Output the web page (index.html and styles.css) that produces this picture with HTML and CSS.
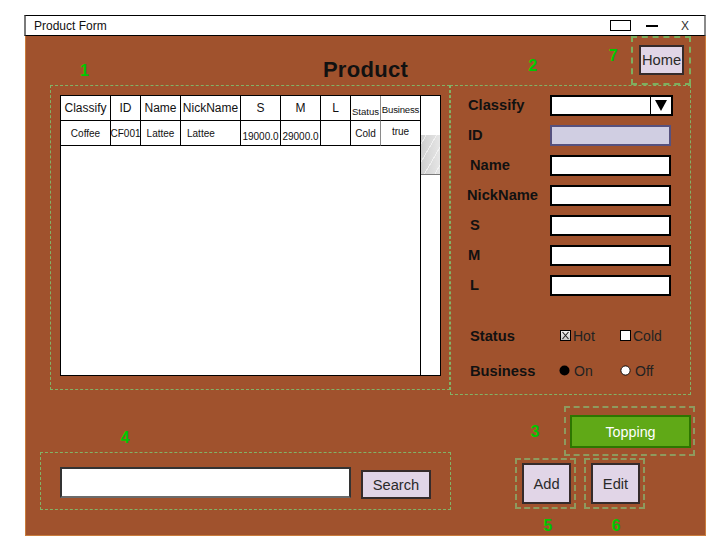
FILE: index.html
```html
<!DOCTYPE html>
<html lang="en">
<head>
<meta charset="utf-8">
<title>Product Form</title>
<link rel="stylesheet" href="styles.css">
</head>
<body>
<div class="window">
  <div class="titlebar">
    <span class="wintitle">Product Form</span>
    <span class="ctl-restore"></span>
    <span class="ctl-min"></span>
    <span class="ctl-close">X</span>
  </div>
  <div class="canvas">
    <div class="header">
      <span class="num n1">1</span>
      <h1 class="title">Product</h1>
      <span class="num n2">2</span>
      <span class="num n7">7</span>
      <div class="homebox"><button class="btn home">Home</button></div>
    </div>

    <div class="main">
      <div class="panel-left">
        <div class="tablebox">
          <div class="grid">
            <div class="th">Classify</div>
            <div class="th">ID</div>
            <div class="th">Name</div>
            <div class="th">NickName</div>
            <div class="th">S</div>
            <div class="th">M</div>
            <div class="th">L</div>
            <div class="th small status">Status</div>
            <div class="th small last">Business</div>

            <div class="td">Coffee</div>
            <div class="td">CF001</div>
            <div class="td">Lattee</div>
            <div class="td left">Lattee</div>
            <div class="td low">19000.0</div>
            <div class="td low">29000.0</div>
            <div class="td"></div>
            <div class="td status">Cold</div>
            <div class="td last high">true</div>
          </div>
          <div class="scroll"><div class="thumb"></div></div>
        </div>
      </div>

      <div class="panel-right">
        <div class="form">
          <label class="flabel">Classify</label>
          <div class="select"><div class="sel-field"></div><div class="sel-arrow"><svg width="12" height="11" viewBox="0 0 12 11"><polygon points="0,0 12,0 6,11" fill="#000"/></svg></div></div>

          <label class="flabel">ID</label>
          <div class="field field-id"></div>

          <label class="flabel nudge2">Name</label>
          <div class="field"></div>

          <label class="flabel nudge-1">NickName</label>
          <div class="field"></div>

          <label class="flabel nudge2">S</label>
          <div class="field"></div>

          <label class="flabel">M</label>
          <div class="field"></div>

          <label class="flabel nudge2">L</label>
          <div class="field"></div>
        </div>

        <div class="choices">
          <div class="choice-row">
            <span class="clabel">Status</span>
            <span class="opt">
              <svg class="box" width="11" height="11" viewBox="0 0 11 11">
                <defs><linearGradient id="cb" x1="0" y1="0" x2="0" y2="1"><stop offset="0" stop-color="#f4f4f4"/><stop offset="1" stop-color="#c8c8c8"/></linearGradient></defs>
                <rect x="0.5" y="0.5" width="10" height="10" fill="url(#cb)" stroke="#000"/>
                <path d="M2.5 2 L8.5 9 M8.5 2 L2.5 9" stroke="#222" stroke-width="1.1"/>
              </svg><span class="otext">Hot</span>
            </span>
            <span class="opt">
              <svg class="box" width="11" height="11" viewBox="0 0 11 11"><rect x="0.5" y="0.5" width="10" height="10" fill="#fff" stroke="#000"/></svg><span class="otext">Cold</span>
            </span>
          </div>
          <div class="choice-row biz">
            <span class="clabel">Business</span>
            <span class="opt">
              <svg class="radio" width="11" height="11" viewBox="0 0 11 11"><circle cx="5.5" cy="5.5" r="5" fill="#000"/></svg><span class="rtext">On</span>
            </span>
            <span class="opt">
              <svg class="radio off" width="11" height="11" viewBox="0 0 11 11"><circle cx="5.5" cy="5.5" r="4.6" fill="#fff" stroke="#000" stroke-width="0.9"/></svg><span class="rtext">Off</span>
            </span>
          </div>
        </div>
      </div>
    </div>

    <div class="bottom">
      <div class="searcharea">
        <span class="num n4">4</span>
        <div class="searchbox">
          <div class="searchinput"></div>
          <button class="btn search">Search</button>
        </div>
      </div>
      <div class="actions">
        <div class="toprow">
          <span class="num n3">3</span>
          <div class="toppingbox"><button class="topping">Topping</button></div>
        </div>
        <div class="btnrow">
          <div class="actbox"><button class="btn act">Add</button></div>
          <div class="actbox"><button class="btn act">Edit</button></div>
        </div>
        <div class="numrow">
          <span class="num n5">5</span>
          <span class="num n6">6</span>
        </div>
      </div>
    </div>
  </div>
</div>
</body>
</html>
```

FILE: styles.css
```css
* { box-sizing: border-box; }
html, body { margin: 0; padding: 0; background: #fff; }
body { font-family: "Liberation Sans", Arial, Helvetica, sans-serif; color: #000; }

.window { margin: 15px 0 0 24px; width: 682px; }

.titlebar {
  height: 21px;
  background: #fff;
  border-top: 1px solid #000;
  border-bottom: 1px solid #000;
  border-left: 2px solid #7a7a7a;
  border-right: 2px solid #8a8a8a;
  display: flex;
  align-items: center;
}
.wintitle { margin-left: 8px; font-size: 12px; color: #111; }
.ctl-restore { margin-left: auto; margin-right: 15px; width: 21px; height: 11px; border: 1px solid #000; }
.ctl-min { width: 12px; height: 2px; background: #000; margin-right: 23px; margin-top: 1px; }
.ctl-close { font-size: 12px; color: #333; width: 8px; margin-right: 15px; line-height: 12px; }

.canvas {
  margin-left: 1px;
  width: 681px;
  height: 500px;
  background: #a0522d;
  border: 1px solid #c97c3c;
  border-top: none;
  overflow: hidden;
}

.num {
  display: block;
  width: 12px;
  text-align: center;
  font-size: 16px;
  line-height: 16px;
  font-weight: bold;
  color: #00c800;
}

.header { display: flex; height: 49px; align-items: flex-start; }
.n1 { margin-left: 52.5px; margin-top: 26.5px; }
.title {
  margin: 21px 0 0 215px;
  width: 120px;
  text-align: center;
  font-size: 22px;
  line-height: 26px;
  font-weight: bold;
  letter-spacing: 0.3px;
  color: #111;
}
.n2 { margin-left: 101.2px; margin-top: 21.5px; }
.n7 { margin-left: 68.6px; margin-top: 11.5px; }
.homebox {
  margin-left: 11.7px;
  width: 60px;
  height: 49px;
  border: 2px dashed #7fae5e;
  padding: 7px 0 0 6px;
}

.btn {
  display: block;
  margin: 0;
  padding: 0;
  background: #e1d5e7;
  border: 2px solid #352b2b;
  color: #2a2a2a;
  font-family: "Liberation Sans", Arial, Helvetica, sans-serif;
  font-size: 14.7px;
}
.home { width: 45px; height: 30px; }

.main { display: flex; align-items: flex-start; height: 310px; }
.panel-left {
  margin-left: 24px;
  width: 400px;
  height: 305px;
  border: 1px dashed #82b366;
  padding: 9px 0 0 9px;
}
.tablebox {
  width: 381px;
  height: 281px;
  background: #fff;
  border: 1px solid #000;
  display: flex;
}
.grid {
  width: 359px;
  display: grid;
  grid-template-columns: 50px 30px 40px 60px 40px 40px 30px 30px 39px;
  grid-auto-rows: 25px;
  align-content: start;
}
.th, .td {
  border-right: 1px solid #000;
  border-bottom: 1px solid #000;
  display: flex;
  align-items: center;
  justify-content: center;
  white-space: nowrap;
  overflow: visible;
}
.th { font-size: 12px; color: #111; }
.td { font-size: 10px; color: #111; }
.th.small { font-size: 9.6px; }
.th.status { padding-top: 7px; }
.th.last { padding-top: 3px; letter-spacing: -0.2px; }
.status { border-right-color: #8a8a8a; }
.last { border-right: none; }
.td.left { justify-content: flex-start; padding-left: 6px; }
.td.low { padding-top: 6px; }
.td.high { padding-bottom: 4px; }

.scroll { width: 20px; border-left: 1px solid #000; }
.thumb {
  margin-top: 39px;
  height: 40px;
  border-bottom: 1px solid #7a7a7a;
  background:
    repeating-linear-gradient(120deg, rgba(255,255,255,0) 0 4px, rgba(255,255,255,0.55) 4px 5px, rgba(255,255,255,0) 5px 9px),
    linear-gradient(90deg, #cfcfcf, #e6e6e6);
}

.panel-right {
  width: 241px;
  height: 310px;
  border: 1px dashed #82b366;
  padding-top: 9px;
}
.form {
  display: grid;
  grid-template-columns: 99px 123px;
  grid-auto-rows: 21px;
  row-gap: 9px;
}
.flabel {
  padding-left: 17px;
  font-size: 14.7px;
  font-weight: bold;
  color: #111;
  line-height: 21px;
  white-space: nowrap;
}
.flabel.nudge2 { padding-left: 19px; }
.flabel.nudge-1 { padding-left: 16px; }
.field { width: 121px; height: 21px; background: #fff; border: 2px solid #000; }
.field-id { background: #d0cee2; border-color: #56517e; }
.select { width: 123px; height: 21px; border: 2px solid #000; background: #fff; display: flex; }
.sel-field { flex: 1; }
.sel-arrow {
  width: 21px;
  border-left: 1px solid #000;
  display: flex;
  align-items: center;
  justify-content: center;
}

.choices { margin-top: 29px; }
.choice-row {
  display: grid;
  grid-template-columns: 109px 60px 60px;
  height: 21px;
  align-items: center;
}
.choice-row.biz { margin-top: 14px; }
.clabel { padding-left: 19px; font-size: 14.7px; font-weight: bold; color: #111; }
.opt { display: flex; align-items: center; }
.box { display: block; }
.otext { margin-left: 2px; font-size: 14px; color: #222; }
.radio { display: block; margin-left: -1px; }
.radio.off { margin-left: 0; }
.rtext { margin-left: 4px; font-size: 14px; color: #222; }

.bottom { display: flex; align-items: flex-start; }
.searcharea { margin-left: 14px; }
.n4 { margin-left: 79px; margin-top: 35px; }
.searchbox {
  margin-top: 6px;
  width: 411px;
  height: 58px;
  border: 1px dashed #82b366;
  display: flex;
  align-items: flex-start;
  padding: 14px 0 0 19px;
}
.searchinput {
  width: 291px;
  height: 31px;
  background: #fff;
  border: 2px solid #333;
  border-bottom-color: #6b6b6b;
}
.search { margin: 3px 0 0 10px; width: 70px; height: 29px; }

.actions { margin-left: 64px; }
.toprow { display: flex; align-items: flex-start; margin-top: 11px; }
.n3 { margin-left: 14px; margin-top: 17.5px; }
.toppingbox {
  margin-left: 23px;
  width: 131px;
  height: 50px;
  border: 2px dashed #8e9a5e;
  padding: 7px 0 0 4px;
}
.topping {
  display: block;
  margin: 0;
  padding: 0;
  width: 121px;
  height: 33px;
  background: #60a917;
  border: 2px solid #2d7600;
  color: #fff;
  font-family: "Liberation Sans", Arial, Helvetica, sans-serif;
  font-size: 14.3px;
}
.btnrow { display: flex; gap: 8px; margin-top: 2px; }
.actbox {
  width: 61px;
  height: 51px;
  border: 2px dashed #8e9a5e;
  padding: 3px 0 0 5px;
}
.act { width: 49px; height: 41px; }
.numrow { display: flex; margin-top: 8.5px; }
.n5 { margin-left: 26.7px; }
.n6 { margin-left: 56.3px; }
```
